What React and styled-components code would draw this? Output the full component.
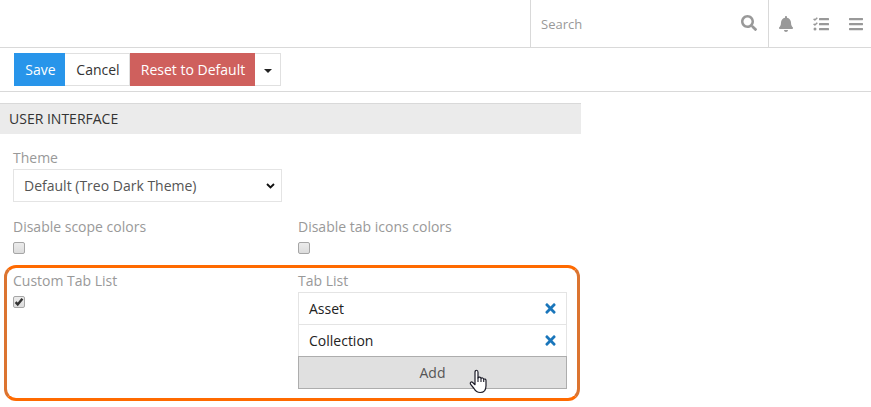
import React from "react";
import styled, { createGlobalStyle } from "styled-components";
import { FaSearch, FaBell, FaBars, FaTimes } from "react-icons/fa";

const GlobalStyle = createGlobalStyle`
  *, *::before, *::after { box-sizing: border-box; }
  body {
    margin: 0;
    background: #fff;
    color: #333;
    font: 14px/20px "Open Sans", "Noto Sans", sans-serif;
    overflow: hidden;
  }
  button { font: inherit; }
`;

const Page = styled.div`
  height: 407px;
  overflow: hidden;
`;

const Navbar = styled.header`
  display: flex;
  justify-content: flex-end;
  height: 48px;
  border-bottom: 1px solid #d9d9d9;
`;

const SearchBox = styled.div`
  display: flex;
  align-items: center;
  justify-content: space-between;
  width: 239px;
  padding: 0 11px 0 10px;
  border: solid #d9d9d9;
  border-width: 0 1px;
  color: #999;
  font-size: 13px;
  svg { display: block; margin-top: -1px; }
`;

const NavIcons = styled.nav`
  display: flex;
  align-items: center;
  width: 102px;
  padding-left: 10px;
  color: #999;
`;

const NavIcon = styled.span`
  display: flex;
  justify-content: center;
  width: ${(p) => p.$width}px;
  margin-right: ${(p) => p.$gap || 0}px;
`;

const Toolbar = styled.div`
  display: flex;
  height: 44px;
  padding: 5px 14px;
  border-bottom: 1px solid #d9d9d9;
`;

const tones = {
  primary: "background: #2895ea; border-color: #2895ea; color: #fff;",
  danger: "background: #cf605d; border-color: #cf605d; color: #fff;",
  plain: "background: #fff; border-color: #e0e0e0; color: #333;",
};

const ToolButton = styled.button`
  display: flex;
  align-items: center;
  justify-content: center;
  width: ${(p) => p.$width}px;
  height: 33px;
  padding: 0 0 0 ${(p) => p.$shift || 0}px;
  border: 1px solid;
  white-space: nowrap;
  ${(p) => tones[p.$tone]}
  border-left-width: ${(p) => (p.$tone === "plain" ? 0 : 1)}px;
`;

const Caret = styled.span`
  border: solid transparent;
  border-width: 4px 4px 0;
  border-top-color: #222;
  margin-top: 2px;
`;

const Panel = styled.section`
  width: 581px;
  margin-top: 11px;
`;

const PanelHeading = styled.h4`
  height: 31px;
  margin: 0;
  padding: 0 9px;
  border-top: 1px solid #d9d9d9;
  background: #ebebeb;
  font-size: 14px;
  font-weight: 400;
  line-height: 29px;
`;

const FieldRow = styled.div`
  display: grid;
  grid-template-columns: 285px 269px;
  height: ${(p) => p.$height}px;
  padding: 14px 0 0 13px;
`;

const HighlightedRow = styled.div`
  display: grid;
  grid-template-columns: 285px 269px;
  width: 576px;
  height: 136px;
  margin-left: 4px;
  padding: 3px 0 0 6px;
  border: 3px solid;
  border-color: #ff6a00 #dc7430;
  border-radius: 12px;
`;

const Label = styled.div`
  height: 21px;
  color: #999;
  white-space: nowrap;
`;

const Select = styled.div`
  display: flex;
  align-items: center;
  justify-content: space-between;
  width: 269px;
  height: 33px;
  padding: 0 6px 0 10px;
  border: 1px solid #e4e4e4;
  color: #555;
`;

const CheckMark = styled.span`
  display: flex;
  width: 12px;
  height: 12px;
  margin-top: 4px;
  border: 1px solid #a6a6a6;
  border-radius: 2px;
  background: linear-gradient(#ececec, #dcdcdc);
  svg { display: block; }
`;

const List = styled.ul`
  margin: 0;
  padding: 0;
  border: 1px solid #e4e4e4;
  border-bottom: 0;
  list-style: none;
`;

const ListItem = styled.li`
  display: flex;
  align-items: center;
  justify-content: space-between;
  height: 31px;
  padding: 0 8px 0 10px;
  color: #222;
  & + & { border-top: 1px solid #e4e4e4; height: 32px; }
  svg { display: block; color: #1a76bb; }
`;

const AddButton = styled.button`
  position: relative;
  display: block;
  width: 100%;
  height: 33px;
  padding: 0;
  border: 1px solid #adadad;
  background: #e0e0e0;
  color: #555;
`;

const Pointer = styled.svg`
  position: absolute;
  left: 170px;
  top: 12px;
`;

function TasksIcon() {
  return (
    <svg width="16" height="16" viewBox="0 0 512 512" fill="currentColor">
      <rect x="192" y="60" width="320" height="76" rx="16" />
      <rect x="192" y="220" width="320" height="76" rx="16" />
      <rect x="192" y="380" width="320" height="76" rx="16" />
      <circle cx="64" cy="416" r="48" />
      <path
        d="M20 92 60 130 138 53M20 252 60 290 138 213"
        fill="none"
        stroke="currentColor"
        strokeWidth="46"
        strokeLinejoin="round"
      />
    </svg>
  );
}

function Checkbox({ checked }) {
  return (
    <CheckMark role="checkbox" aria-checked={!!checked}>
      {checked && (
        <svg width="10" height="10" viewBox="0 0 10 10" fill="none">
          <path d="M1.600 5.200 3.700 7.400 8.400 1.700" stroke="#333" strokeWidth="2.400" />
        </svg>
      )}
    </CheckMark>
  );
}

function Field({ label, children }) {
  return (
    <div>
      <Label>{label}</Label>
      {children}
    </div>
  );
}

export default function App() {
  return (
    <Page>
      <GlobalStyle />
      <Navbar>
        <SearchBox>
          <span>Search</span>
          <FaSearch size={16} />
        </SearchBox>
        <NavIcons>
          <NavIcon $width={14} $gap={20}><FaBell size={16} /></NavIcon>
          <NavIcon $width={16} $gap={20}><TasksIcon /></NavIcon>
          <NavIcon $width={14}><FaBars size={16} /></NavIcon>
        </NavIcons>
      </Navbar>
      <Toolbar>
        <ToolButton $tone="primary" $width={51} $shift={2}>Save</ToolButton>
        <ToolButton $tone="plain" $width={65} $shift={2}>Cancel</ToolButton>
        <ToolButton $tone="danger" $width={125} $shift={1}>Reset to Default</ToolButton>
        <ToolButton $tone="plain" $width={26} aria-label="More"><Caret /></ToolButton>
      </Toolbar>
      <Panel>
        <PanelHeading>USER INTERFACE</PanelHeading>
        <FieldRow $height={69}>
          <Field label="Theme">
            <Select>
              <span>Default (Treo Dark Theme)</span>
              <svg width="9" height="6" viewBox="0 0 9 6" fill="none">
                <path d="M1 1 4.500 4.400 8 1" stroke="#111" strokeWidth="1.900" />
              </svg>
            </Select>
          </Field>
        </FieldRow>
        <FieldRow $height={62}>
          <Field label="Disable scope colors"><Checkbox /></Field>
          <Field label="Disable tab icons colors"><Checkbox /></Field>
        </FieldRow>
        <HighlightedRow>
          <Field label="Custom Tab List"><Checkbox checked /></Field>
          <Field label="Tab List">
            <List>
              <ListItem>Asset<FaTimes size={15} /></ListItem>
              <ListItem>Collection<FaTimes size={15} /></ListItem>
            </List>
            <AddButton>
              Add
              <Pointer width="18" height="25" viewBox="0 0 18 25">
                <path
                  d="M6 14V3.200C6 .6 9 .6 9 3.200V9c.6-1.300 2.700-1 3 .5.8-1 2.500-.6 2.700.8.9-.7 2.300-.1 2.300 1.200v5.200c0 4.300-2.200 6.800-5.800 6.800-3.200 0-4.800-1.500-6.200-4L1.500 15.200c-.9-1.600.9-2.900 2.200-1.700L6 15.700z"
                  fill="#fff"
                  stroke="#1c1c28"
                  strokeWidth="1.200"
                  strokeLinejoin="round"
                />
                <path d="M9 8.500v4.500M12 9.500V13M14.700 10.500V13" stroke="#1c1c28" strokeWidth="1.100" fill="none" />
              </Pointer>
            </AddButton>
          </Field>
        </HighlightedRow>
      </Panel>
    </Page>
  );
}
